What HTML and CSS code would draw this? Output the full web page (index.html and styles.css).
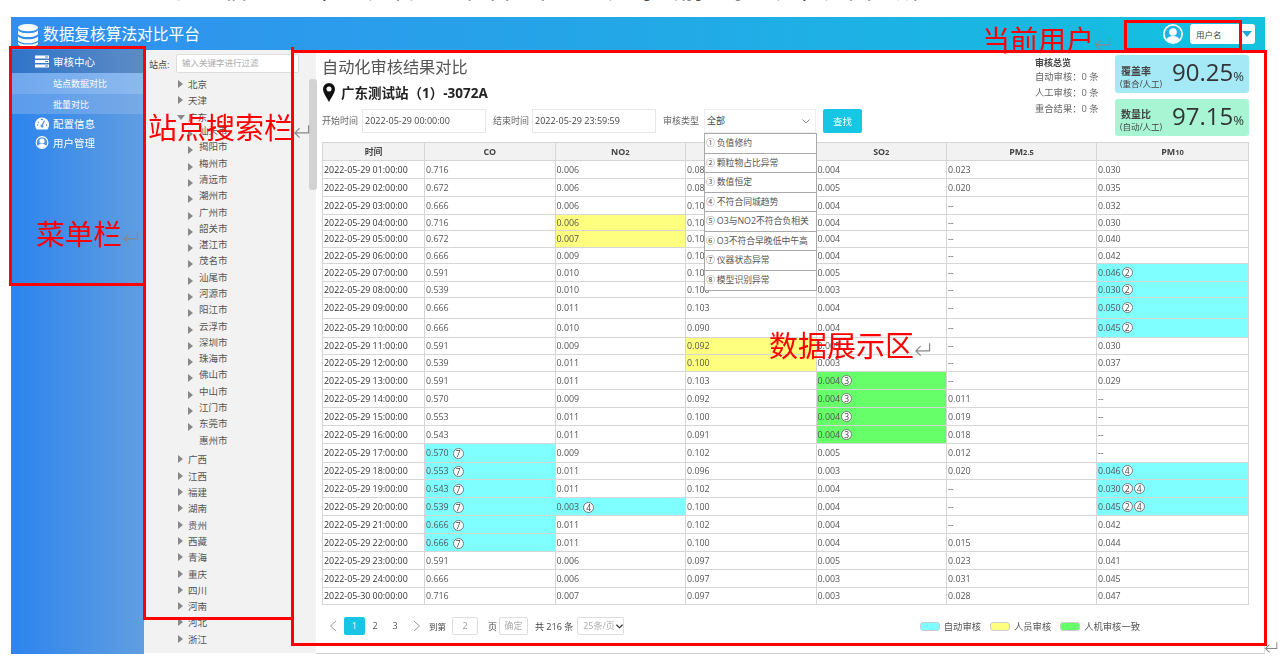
FILE: index.html
```html
<!DOCTYPE html>
<html lang="zh-CN">
<head>
<meta charset="utf-8">
<title>数据复核算法对比平台</title>
<link rel="stylesheet" href="styles.css">
</head>
<body>
<div class="note"><p>配置信息　　，用户管理、栏目　和主用户等当前登录用户，如图一所示</p></div>
<div class="app">
  <header class="topbar">
    <svg class="logo" viewBox="0 0 20 23"><g fill="#fff"><ellipse cx="10" cy="3.6" rx="10" ry="3.6"/><path d="M0 6.2C2 8.6 6 9.2 10 9.2s8-.6 10-3v4C18 12.4 14 13 10 13S2 12.4 0 10.200z"/><path d="M0 12.400C2 14.600 6 15.200 10 15.200s8-.6 10-2.800v4C18 18.600 14 19.200 10 19.200S2 18.600 0 16.400z"/><path d="M0 18C2 20 6 20.600 10 20.600S18 20 20 18v1.400C20 21.500 15.500 23 10 23S0 21.500 0 19.400z"/></g></svg>
    <h1 class="brand">数据复核算法对比平台</h1>
    <div class="user">
      <svg class="avatar" viewBox="0 0 20 20"><circle cx="10" cy="10" r="10" fill="#fff"/><circle cx="10" cy="10" r="8.300" fill="#22b5e4"/><circle cx="10" cy="8" r="3.800" fill="#fff"/><path d="M3.500 15.500C5 12.600 7.500 12 10 12s5 .6 6.500 3.500A8.300 8.300 0 0 1 10 18.300a8.300 8.300 0 0 1-6.500-2.800z" fill="#fff"/></svg>
      <div class="user-box"><span>用户名</span><i class="user-caret"></i></div>
    </div>
  </header>
  <div class="body">
    <nav class="menu">
      <a class="menu-item menu-open">
        <svg class="menu-icon" viewBox="0 0 14 12"><path fill="#fff" d="M0 0h14v3H0zM0 4.500h14v3H0zM0 9h14v3H0z"/><path fill="#4d85c6" d="M10 1h3v1h-3zM10 5.500h3v1h-3zM10 10h3v1h-3z"/></svg>
        审核中心
      </a>
      <a class="menu-sub menu-sub-on">站点数据对比</a>
      <a class="menu-sub">批量对比</a>
      <a class="menu-item">
        <svg class="menu-icon" viewBox="0 0 14 12"><path fill="#fff" d="M7 0a7 7 0 0 1 7 7c0 2-.7 3.600-1.700 5H1.700C.7 10.600 0 9 0 7a7 7 0 0 1 7-7z"/><path stroke="#5593e4" stroke-width="1.300" fill="none" d="M7 8l2.500-5M3 4.500l.8.700M2 7.500h1M11 7.500h1M6 1.800h2"/><circle cx="7" cy="8.500" r="1.500" fill="#5593e4"/></svg>
        配置信息
      </a>
      <a class="menu-item">
        <svg class="menu-icon" viewBox="0 0 14 14"><circle cx="7" cy="7" r="6.300" fill="#5593e4" stroke="#fff" stroke-width="1.200"/><circle cx="7" cy="5.400" r="2.800" fill="#fff"/><path fill="#fff" d="M2.400 11C3.400 9 5.200 8.600 7 8.600s3.600.4 4.600 2.400A6 6 0 0 1 7 13a6 6 0 0 1-4.600-2z"/></svg>
        用户管理
      </a>
    </nav>
    <aside class="stations">
      <div class="search"><label>站点:</label><div class="search-box">输入关键字进行过滤</div></div>
      <ul class="tree">
        <li class="node"><i class="arrow"></i>北京</li>
        <li class="node"><i class="arrow"></i>天津</li>
        <li class="node"><i class="arrow arrow-down"></i>广东</li>
        <li>
          <ul class="tree-sub">
            <li class="node"><i class="arrow"></i>汕头市</li>
            <li class="node"><i class="arrow"></i>揭阳市</li>
            <li class="node"><i class="arrow"></i>梅州市</li>
            <li class="node"><i class="arrow"></i>清远市</li>
            <li class="node"><i class="arrow"></i>潮州市</li>
            <li class="node"><i class="arrow"></i>广州市</li>
            <li class="node"><i class="arrow"></i>韶关市</li>
            <li class="node"><i class="arrow"></i>湛江市</li>
            <li class="node"><i class="arrow"></i>茂名市</li>
            <li class="node"><i class="arrow"></i>汕尾市</li>
            <li class="node"><i class="arrow"></i>河源市</li>
            <li class="node"><i class="arrow"></i>阳江市</li>
            <li class="node"><i class="arrow"></i>云浮市</li>
            <li class="node"><i class="arrow"></i>深圳市</li>
            <li class="node"><i class="arrow"></i>珠海市</li>
            <li class="node"><i class="arrow"></i>佛山市</li>
            <li class="node"><i class="arrow"></i>中山市</li>
            <li class="node"><i class="arrow"></i>江门市</li>
            <li class="node"><i class="arrow"></i>东莞市</li>
            <li class="node"><i class="arrow arrow-none"></i>惠州市</li>
          </ul>
        </li>
        <li class="node"><i class="arrow"></i>广西</li>
        <li class="node"><i class="arrow"></i>江西</li>
        <li class="node"><i class="arrow"></i>福建</li>
        <li class="node"><i class="arrow"></i>湖南</li>
        <li class="node"><i class="arrow"></i>贵州</li>
        <li class="node"><i class="arrow"></i>西藏</li>
        <li class="node"><i class="arrow"></i>青海</li>
        <li class="node"><i class="arrow"></i>重庆</li>
        <li class="node"><i class="arrow"></i>四川</li>
        <li class="node"><i class="arrow"></i>河南</li>
        <li class="node"><i class="arrow"></i>河北</li>
        <li class="node"><i class="arrow"></i>浙江</li>
      </ul>
      <div class="scrollbar"></div>
    </aside>
    <main class="content">
      <div class="head">
        <div class="head-left">
          <h2 class="page-title">自动化审核结果对比</h2>
          <div class="station">
            <svg class="pin" viewBox="0 0 12 19"><path fill="#111" fill-rule="evenodd" d="M6 0a6 6 0 0 1 6 6c0 4-4 9-6 13C4 15 0 10 0 6a6 6 0 0 1 6-6zm0 3.500a2.500 2.500 0 1 0 0 5 2.500 2.500 0 0 0 0-5z"/></svg>
            <span>广东测试站（1）-3072A</span>
          </div>
          <div class="filters">
            <label>开始时间</label><div class="field field-time">2022-05-29 00:00:00</div>
            <label class="label-end">结束时间</label><div class="field field-time">2022-05-29 23:59:59</div>
            <label class="label-type">审核类型</label>
            <div class="field field-select">全部<svg class="chev" viewBox="0 0 8 5"><path d="M.5.500L4 4 7.500.500" fill="none" stroke="#888"/></svg>
              <ul class="options">
                <li><span class="no">①</span>负值修约</li>
                <li><span class="no">②</span>颗粒物占比异常</li>
                <li><span class="no">③</span>数值恒定</li>
                <li><span class="no">④</span>不符合同城趋势</li>
                <li><span class="no">⑤</span>O3与NO2不符合负相关</li>
                <li><span class="no">⑥</span>O3不符合早晚低中午高</li>
                <li><span class="no">⑦</span>仪器状态异常</li>
                <li><span class="no">⑧</span>模型识别异常</li>
              </ul>
            </div>
            <button class="find">查找</button>
          </div>
        </div>
        <div class="summary">
          <b>审核总览</b>
          <p>自动审核：0 条</p>
          <p>人工审核：0 条</p>
          <p>重合结果：0 条</p>
        </div>
        <div class="cards">
          <div class="card card-blue"><div class="card-label"><b>覆盖率</b><span>(重合/人工)</span></div><div class="card-num">90.25<small>%</small></div></div>
          <div class="card card-green"><div class="card-label"><b>数量比</b><span>(自动/人工)</span></div><div class="card-num">97.15<small>%</small></div></div>
        </div>
      </div>
      <table class="grid">
        <colgroup><col class="c-time"><col class="c-a"><col class="c-a"><col class="c-a"><col class="c-a"><col class="c-b"><col class="c-c"></colgroup>
        <thead><tr><th>时间</th><th>CO</th><th>NO<small>2</small></th><th>O<small>3</small></th><th>SO<small>2</small></th><th>PM<small>2.5</small></th><th>PM<small>10</small></th></tr></thead>
        <tbody>
          <tr class="h18"><td>2022-05-29 01:00:00</td><td>0.716</td><td>0.006</td><td>0.080</td><td>0.004</td><td>0.023</td><td>0.030</td></tr>
          <tr class="h18"><td>2022-05-29 02:00:00</td><td>0.672</td><td>0.006</td><td>0.081</td><td>0.005</td><td>0.020</td><td>0.035</td></tr>
          <tr class="h18"><td>2022-05-29 03:00:00</td><td>0.666</td><td>0.006</td><td>0.100</td><td>0.004</td><td>--</td><td>0.032</td></tr>
          <tr class="h16"><td>2022-05-29 04:00:00</td><td>0.716</td><td class="yellow">0.006</td><td>0.100</td><td>0.004</td><td>--</td><td>0.030</td></tr>
          <tr class="h17"><td>2022-05-29 05:00:00</td><td>0.672</td><td class="yellow">0.007</td><td>0.100</td><td>0.004</td><td>--</td><td>0.040</td></tr>
          <tr class="h16"><td>2022-05-29 06:00:00</td><td>0.666</td><td>0.009</td><td>0.100</td><td>0.004</td><td>--</td><td>0.042</td></tr>
          <tr class="h18"><td>2022-05-29 07:00:00</td><td>0.591</td><td>0.010</td><td>0.100</td><td>0.005</td><td>--</td><td class="cyan">0.046<i class="mark">2</i></td></tr>
          <tr class="h16"><td>2022-05-29 08:00:00</td><td>0.539</td><td>0.010</td><td>0.100</td><td>0.003</td><td>--</td><td class="cyan">0.030<i class="mark">2</i></td></tr>
          <tr class="h21"><td>2022-05-29 09:00:00</td><td>0.666</td><td>0.011</td><td>0.103</td><td>0.004</td><td>--</td><td class="cyan">0.050<i class="mark">2</i></td></tr>
          <tr class="h19"><td>2022-05-29 10:00:00</td><td>0.666</td><td>0.010</td><td>0.090</td><td>0.004</td><td>--</td><td class="cyan">0.045<i class="mark">2</i></td></tr>
          <tr class="h17"><td>2022-05-29 11:00:00</td><td>0.591</td><td>0.009</td><td class="yellow">0.092</td><td>0.005</td><td>--</td><td>0.030</td></tr>
          <tr class="h17"><td>2022-05-29 12:00:00</td><td>0.539</td><td>0.011</td><td class="yellow">0.100</td><td>0.003</td><td>--</td><td>0.037</td></tr>
          <tr class="h18"><td>2022-05-29 13:00:00</td><td>0.591</td><td>0.011</td><td>0.103</td><td class="green">0.004<i class="mark">3</i></td><td>--</td><td>0.029</td></tr>
          <tr class="h18"><td>2022-05-29 14:00:00</td><td>0.570</td><td>0.009</td><td>0.092</td><td class="green">0.004<i class="mark">3</i></td><td>0.011</td><td>--</td></tr>
          <tr class="h18"><td>2022-05-29 15:00:00</td><td>0.553</td><td>0.011</td><td>0.100</td><td class="green">0.004<i class="mark">3</i></td><td>0.019</td><td>--</td></tr>
          <tr class="h18"><td>2022-05-29 16:00:00</td><td>0.543</td><td>0.011</td><td>0.091</td><td class="green">0.004<i class="mark">3</i></td><td>0.018</td><td>--</td></tr>
          <tr class="h19"><td>2022-05-29 17:00:00</td><td class="cyan">0.570<i class="mark wide">7</i></td><td>0.009</td><td>0.102</td><td>0.005</td><td>0.012</td><td>--</td></tr>
          <tr class="h17"><td>2022-05-29 18:00:00</td><td class="cyan">0.553<i class="mark wide">7</i></td><td>0.011</td><td>0.096</td><td>0.003</td><td>0.020</td><td class="cyan">0.046<i class="mark">4</i></td></tr>
          <tr class="h18"><td>2022-05-29 19:00:00</td><td class="cyan">0.543<i class="mark wide">7</i></td><td>0.011</td><td>0.102</td><td>0.004</td><td>--</td><td class="cyan">0.030<i class="mark">2</i><i class="mark">4</i></td></tr>
          <tr class="h18"><td>2022-05-29 20:00:00</td><td class="cyan">0.539<i class="mark wide">7</i></td><td class="cyan">0.003<i class="mark wide">4</i></td><td>0.100</td><td>0.004</td><td>--</td><td class="cyan">0.045<i class="mark">2</i><i class="mark">4</i></td></tr>
          <tr class="h18"><td>2022-05-29 21:00:00</td><td class="cyan">0.666<i class="mark wide">7</i></td><td>0.011</td><td>0.102</td><td>0.004</td><td>--</td><td>0.042</td></tr>
          <tr class="h18"><td>2022-05-29 22:00:00</td><td class="cyan">0.666<i class="mark wide">7</i></td><td>0.011</td><td>0.100</td><td>0.004</td><td>0.015</td><td>0.044</td></tr>
          <tr class="h18"><td>2022-05-29 23:00:00</td><td>0.591</td><td>0.006</td><td>0.097</td><td>0.005</td><td>0.023</td><td>0.041</td></tr>
          <tr class="h18"><td>2022-05-29 24:00:00</td><td>0.666</td><td>0.006</td><td>0.097</td><td>0.003</td><td>0.031</td><td>0.045</td></tr>
          <tr class="h17"><td>2022-05-30 00:00:00</td><td>0.716</td><td>0.007</td><td>0.097</td><td>0.003</td><td>0.028</td><td>0.047</td></tr>
        </tbody>
      </table>
      <div class="foot">
        <div class="pager">
          <svg class="pg-arrow" viewBox="0 0 8 12"><path d="M7 1L1.500 6 7 11" fill="none" stroke="#999"/></svg>
          <span class="pg pg-on">1</span><span class="pg">2</span><span class="pg">3</span>
          <svg class="pg-arrow pg-next" viewBox="0 0 8 12"><path d="M1 1l5.500 5L1 11" fill="none" stroke="#999"/></svg>
          <span class="pg-text pg-goto">到第</span>
          <span class="pg-input">2</span>
          <span class="pg-text pg-unit">页</span>
          <span class="pg-ok">确定</span>
          <span class="pg-text">共 216 条</span>
          <span class="pg-size">25条/页<svg class="pg-chev" viewBox="0 0 8 5"><path d="M.5.500L4 4 7.500.500" fill="none" stroke="#222" stroke-width="1.300"/></svg></span>
        </div>
        <div class="legend">
          <i class="swatch cyan"></i><span>自动审核</span>
          <i class="swatch yellow"></i><span>人员审核</span>
          <i class="swatch green"></i><span>人机审核一致</span>
        </div>
      </div>
    </main>
  </div>
</div>

<!-- red notes drawn on the slide, over the page -->
<div class="box box-menu"></div>
<div class="box box-tree"></div>
<div class="box box-main"></div>
<div class="box box-user"></div>
<div class="tag tag-tree">站点搜索栏<svg class="ret" viewBox="0 0 18 14"><path d="M16.500 1v8H2M7 4L2 9l5 5" fill="none" stroke="#888" stroke-width="1.300"/></svg></div>
<div class="tag tag-user">当前用户<svg class="ret" viewBox="0 0 18 14"><path d="M16.500 1v8H2M7 4L2 9l5 5" fill="none" stroke="#888" stroke-width="1.300"/></svg></div>
<div class="tag tag-menu">菜单栏<svg class="ret" viewBox="0 0 18 14"><path d="M16.500 1v8H2M7 4L2 9l5 5" fill="none" stroke="#888" stroke-width="1.300"/></svg></div>
<div class="tag tag-data">数据展示区<svg class="ret" viewBox="0 0 18 14"><path d="M16.500 1v8H2M7 4L2 9l5 5" fill="none" stroke="#888" stroke-width="1.300"/></svg></div>
<svg class="ret ret-end" viewBox="0 0 18 14"><path d="M16.500 1v8H2M7 4L2 9l5 5" fill="none" stroke="#888" stroke-width="1.300"/></svg>
</body>
</html>
```

FILE: styles.css
```css
* { margin: 0; padding: 0; box-sizing: border-box; }
html, body { height: 658px; overflow: hidden; }
body { background: #fff; color: #555; font-family: "Open Sans", "Noto Sans CJK SC", sans-serif; font-size: 9px; position: relative; }
ul { list-style: none; }
i { font-style: normal; }

.note { height: 17px; overflow: hidden; padding-left: 176px; }
.note p { margin-top: -28px; font-size: 24px; line-height: 33px; color: #222; white-space: nowrap; }

/* the screenshot is a slightly scaled slide, so everything is a little soft */
.app { margin-left: 11px; width: 1254px; height: 637px; display: flex; flex-direction: column; filter: blur(.3px); }

/* top bar */
.topbar { height: 33px; flex: none; display: flex; align-items: center; background: linear-gradient(90deg, #338eef, #13c2df); padding-left: 7px; }
.logo { width: 20px; height: 23px; margin-top: 4px; }
.brand { margin-left: 5px; font-size: 15.700px; font-weight: 400; color: #fff; white-space: nowrap; }
.user { margin-left: auto; margin-right: 10px; display: flex; align-items: center; }
.avatar { width: 20px; height: 20px; margin-right: 7px; }
.user-box { width: 65px; height: 20px; background: #fff; border-radius: 3px; display: flex; align-items: center; padding-left: 6px; color: #444; font-size: 8.500px; }
.user-caret { margin-left: auto; margin-right: 3px; border-left: 5px solid transparent; border-right: 5px solid transparent; border-top: 6px solid #1fa8dd; }

.body { flex: 1; display: flex; min-height: 0; }

/* left menu */
.menu { width: 133px; flex: none; background: linear-gradient(90deg, #2c84ee, #619ee0); color: #fff; font-size: 10.500px; }
.menu-item { height: 19px; display: flex; align-items: center; padding-left: 24px; }
.menu-icon { width: 14px; height: 13px; margin-right: 4px; }
.menu-open { height: 23px; background: linear-gradient(90deg, #2f74c9, #5d8cc4); }
.menu-sub { height: 20px; display: flex; align-items: center; padding-left: 42px; font-size: 9px; background: linear-gradient(90deg, #5a9bec, #77aae6); }
.menu-sub-on { height: 21px; background: linear-gradient(90deg, #70a8ee, #8cb9ee); }

/* station tree */
.stations { width: 172px; flex: none; background: #f2f2f2; position: relative; padding-top: 4px; border-bottom: 1px solid #fff; }
.search { display: flex; align-items: center; padding-left: 5px; height: 19px; font-size: 9px; color: #444; }
.search label { width: 27px; padding-top: 1px; }
.search-box { width: 123px; height: 19px; background: #fff; border: 1px solid #ddd; border-radius: 2px; padding-left: 5px; font-size: 8.500px; color: #aaa; line-height: 16px; }
.tree { margin-top: 3px; padding-left: 34px; font-size: 9.500px; color: #555; }
.node { height: 16.300px; display: flex; align-items: center; white-space: nowrap; }
.arrow { width: 10px; height: 16px; flex: none; position: relative; }
.arrow::before { content: ""; position: absolute; left: 0; top: 4px; border-left: 5px solid #888; border-top: 4px solid transparent; border-bottom: 4px solid transparent; }
.arrow-down::before { left: -1px; top: 6px; border-top: 5px solid #888; border-left: 4px solid transparent; border-right: 4px solid transparent; border-bottom: 0; }
.arrow-none::before { display: none; }
.tree-sub { padding-left: 10px; margin-top: -3px; margin-bottom: 3.500px; }
.tree-sub .arrow { width: 11px; }
.tree-sub .arrow::before { top: 8px; }
.scrollbar { position: absolute; right: -1px; top: 29px; width: 8px; height: 111px; background: #d2d2d2; border-radius: 3px; }

/* main area */
.content { flex: 1; background: #fff; padding-left: 6px; border-bottom: 1px solid #ccc; border-right: 1px solid #ddd; min-width: 0; }
.head { height: 92px; display: flex; }
.head-left { width: 713px; flex: none; }
.page-title { font-size: 16.200px; font-weight: 400; color: #555; line-height: 22px; margin-top: 6px; }
.station { display: flex; align-items: center; height: 20px; margin-top: 4px; font-size: 13.500px; font-weight: 700; color: #222; }
.pin { width: 12px; height: 19px; margin-left: 1px; margin-right: 6px; }
.filters { display: flex; align-items: flex-start; margin-top: 7px; font-size: 9px; color: #666; position: relative; }
.filters label { line-height: 24px; width: 40px; white-space: nowrap; }
.filters .label-end { margin-left: 7px; width: 39px; }
.filters .label-type { margin-left: 7px; width: 41px; }
.field { height: 24px; background: #fff; border: 1px solid #e6e6e6; color: #444; line-height: 21px; padding-left: 2px; }
.field-time { width: 124px; }
.field-select { width: 112px; position: relative; border-color: #eee; }
.chev { position: absolute; right: 5px; top: 9px; width: 8px; height: 5px; }
.options { position: absolute; left: -1px; top: 23px; width: 113px; background: #fff; border: 1px solid #aaa; z-index: 2; }
.options li { height: 19.500px; line-height: 18px; border-bottom: 1px solid #aaa; color: #555; padding-left: 1px; white-space: nowrap; font-size: 8.800px; }
.options li:last-child { border-bottom: 0; }
.options .no { margin-right: 2px; }
.find { margin-left: 7px; width: 39px; height: 24px; background: #16c6e4; color: #fff; border: 0; border-radius: 2px; font: inherit; font-size: 9.500px; }

.summary { margin-top: 6px; width: 80px; flex: none; font-size: 9.300px; color: #666; }
.summary b { display: block; color: #444; line-height: 13px; font-size: 9px; }
.summary p { line-height: 16px; }
.cards { margin-top: 5px; width: 134px; flex: none; display: flex; flex-direction: column; gap: 6px; }
.card { height: 38px; border-radius: 3px; display: flex; align-items: flex-end; padding: 0 5px 3px 5px; justify-content: space-between; }
.card-blue { background: #a6e9f6; }
.card-green { background: #a8f5d4; height: 37px; }
.card-label { display: flex; flex-direction: column; color: #444; line-height: 11px; font-size: 8.500px; padding-bottom: 1px; }
.card-label b { font-size: 10px; margin-left: 1px; line-height: 14px; }
.card-num { font-size: 24px; line-height: 33px; color: #333; white-space: nowrap; align-self: center; margin-top: 3px; }
.card-num small { font-size: 13px; }

/* data table */
.grid { width: 926px; table-layout: fixed; border-collapse: collapse; border: 1px solid #d6d6d6; font-size: 8.900px; color: #555; }
.c-time { width: 102px; }
.c-a { width: 130.500px; }
.c-b { width: 150px; }
.c-c { width: 152px; }
.grid th { height: 18px; background: #f2f2f2; border: 1px solid #d6d6d6; font-weight: 700; color: #444; text-align: center; padding: 0; }
.grid th small { font-size: 7.500px; }
.grid td { border: 1px solid #d6d6d6; padding: 0 0 0 1px; white-space: nowrap; line-height: 12px; }
.grid td:first-child { color: #333; }
.h16 td { height: 16px; }
.h17 td { height: 17px; }
.h18 td { height: 18px; }
.h19 td { height: 19px; }
.h21 td { height: 21px; }
.cyan { background: #7fffff; }
.yellow { background: #ffff7f; }
.green { background: #66ff6a; }
.mark { display: inline-block; width: 11px; height: 11px; margin-left: 1px; border: 1px solid #777; border-radius: 50%; background: #fff; font-size: 8.500px; line-height: 9px; text-align: center; color: #444; }
.mark.wide { margin-left: 4px; vertical-align: -1px; }

/* pager and legend */
.foot { display: flex; justify-content: space-between; margin-top: 12px; width: 926px; align-items: center; font-size: 9px; color: #555; }
.pager { display: flex; align-items: center; padding-left: 7px; height: 18px; }
.pg-arrow { width: 8px; height: 12px; }
.pg { width: 20px; height: 18px; line-height: 17px; text-align: center; border-radius: 2px; }
.pg-on { width: 21px; margin-left: 7px; background: #16c6e4; color: #fff; }
.pg-next { margin-left: 8px; }
.pg-text { margin-left: 7px; white-space: nowrap; color: #444; }
.pg-goto { margin-left: 8px; font-size: 8.500px; }
.pg-input { width: 26px; height: 18px; border: 1px solid #ddd; border-radius: 2px; margin-left: 6px; text-align: center; line-height: 16px; color: #999; }
.pg-unit { margin-left: 10px; }
.pg-ok { width: 29px; height: 18px; border: 1px solid #ddd; border-radius: 2px; margin-left: 2px; text-align: center; line-height: 16px; color: #aaa; }
.pg-size { width: 47px; height: 18px; border: 1px solid #ddd; border-radius: 2px; margin-left: 4px; padding-left: 5px; line-height: 16px; color: #aaa; white-space: nowrap; display: flex; align-items: center; }
.pg-chev { width: 7px; height: 5px; margin-left: 1px; }
.legend { display: flex; align-items: center; margin-right: 108px; font-size: 9.300px; }
.swatch { width: 20px; height: 9px; border-radius: 3px; border: 1px solid #ccc; margin-right: 4px; }
.legend span { margin-right: 9px; white-space: nowrap; }
.legend span:last-child { margin-right: 0; }

/* slide annotations */
.box { position: absolute; border: 3px solid #f00; pointer-events: none; }
.box-menu { left: 9px; top: 46px; width: 137px; height: 240px; }
.box-tree { left: 143px; top: 47px; width: 151px; height: 573px; border-top: 0; }
.box-main { left: 291px; top: 50px; width: 976px; height: 596px; }
.box-user { left: 1124px; top: 20px; width: 118px; height: 31px; }
.tag { position: absolute; color: #f00; font-size: 29px; line-height: 30px; white-space: nowrap; display: flex; align-items: center; }
.tag-tree { left: 148px; top: 113px; }
.tag-user { left: 982px; top: 25px; font-size: 28px; }
.tag-menu { left: 36px; top: 219px; font-size: 28.700px; }
.tag-data { left: 769px; top: 331px; }
.ret { width: 17px; height: 14px; margin-top: 5px; flex: none; }
.ret-end { position: absolute; left: 1264px; top: 640px; width: 14px; margin: 0; }
```
